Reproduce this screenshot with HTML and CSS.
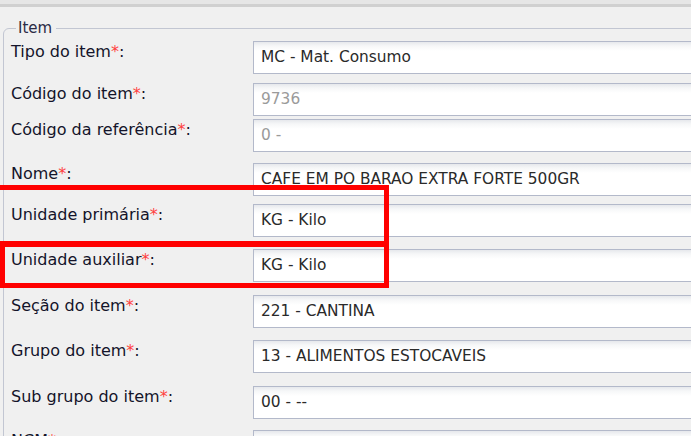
FILE: index.html
```html
<!DOCTYPE html>
<html lang="pt-BR">
<head>
<meta charset="utf-8">
<title>Item</title>
<link rel="stylesheet" href="styles.css">
</head>
<body>
<div class="topbar"></div>
<fieldset class="group">
  <legend class="group-title">Item</legend>
  <div class="rows">
    <div class="row"><span class="label">Tipo do item<span class="req">*</span>:</span><div class="field">MC - Mat. Consumo</div></div>
    <div class="row"><span class="label">Código do item<span class="req">*</span>:</span><div class="field disabled">9736</div></div>
    <div class="row"><span class="label">Código da referência<span class="req">*</span>:</span><div class="field disabled">0 -</div></div>
    <div class="row"><span class="label">Nome<span class="req">*</span>:</span><div class="field">CAFE EM PO BARAO EXTRA FORTE 500GR</div></div>
    <div class="row"><span class="label">Unidade primária<span class="req">*</span>:</span><div class="field">KG - Kilo</div></div>
    <div class="row"><span class="label">Unidade auxiliar<span class="req">*</span>:</span><div class="field">KG - Kilo</div></div>
    <div class="row"><span class="label">Seção do item<span class="req">*</span>:</span><div class="field">221 - CANTINA</div></div>
    <div class="row"><span class="label">Grupo do item<span class="req">*</span>:</span><div class="field">13 - ALIMENTOS ESTOCAVEIS</div></div>
    <div class="row"><span class="label">Sub grupo do item<span class="req">*</span>:</span><div class="field">00 - --</div></div>
    <div class="row"><span class="label">NCM<span class="req">*</span>:</span><div class="field"></div></div>
  </div>
</fieldset>
<div class="highlight highlight-primary"></div>
<div class="highlight highlight-aux"></div>
</body>
</html>
```

FILE: styles.css
```css
html, body {
  margin: 0;
  padding: 0;
  background: #f0f0f0;
  overflow: hidden;
  height: 436px;
}

body {
  position: relative;
  font-family: "DejaVu Sans", Verdana, sans-serif;
}

.topbar {
  height: 4px;
  background: #e6e6e6;
  border-bottom: 3px solid #d0d0d0;
}

.group {
  margin: 13px -40px 0 3px;
  padding: 0 0 0 7px;
  border: 1px solid #c2c6d2;
  border-radius: 6px 0 0 0;
  min-width: 0;
}

.group-title {
  margin-left: 5px;
  padding: 0 4px 0 2px;
  font-size: 15px;
  line-height: 16px;
  color: #2b2b45;
}

.rows {
  display: flex;
  flex-direction: column;
  padding-top: 5px;
}

.row {
  display: flex;
  align-items: flex-start;
  height: 33px;
  margin-bottom: 12px;
}

.row:nth-child(1) { margin-bottom: 9px; }
.row:nth-child(2) { margin-bottom: 3px; }
.row:nth-child(3) { margin-bottom: 11px; }
.row:nth-child(4) { margin-bottom: 8px; }
.row:nth-child(5) { margin-bottom: 12px; }
.row:nth-child(6) { margin-bottom: 13px; }
.row:nth-child(7) { margin-bottom: 12px; }
.row:nth-child(8) { margin-bottom: 13px; }
.row:nth-child(9) { margin-bottom: 11px; }

.label {
  width: 242px;
  flex: none;
  margin-top: 1px;
  font-size: 16px;
  line-height: 20px;
  color: #14142a;
  white-space: nowrap;
}

.req {
  color: #ff4040;
}

.field {
  flex: 1;
  height: 31px;
  border: 1px solid #b3b9ca;
  background: linear-gradient(#e6e8ec 0, #f6f7f8 4px, #ffffff 9px);
  padding: 0 7px;
  font-size: 15.4px;
  line-height: 31px;
  color: #2a2a2a;
  white-space: nowrap;
  overflow: hidden;
}

.field.disabled {
  color: #9a9a9a;
}

.highlight {
  position: absolute;
  border: 5px solid #ff0000;
  box-sizing: border-box;
}

.highlight-primary {
  left: -6px;
  top: 185px;
  width: 395px;
  height: 62px;
}

.highlight-aux {
  left: 0;
  top: 241px;
  width: 389px;
  height: 47px;
}
```
